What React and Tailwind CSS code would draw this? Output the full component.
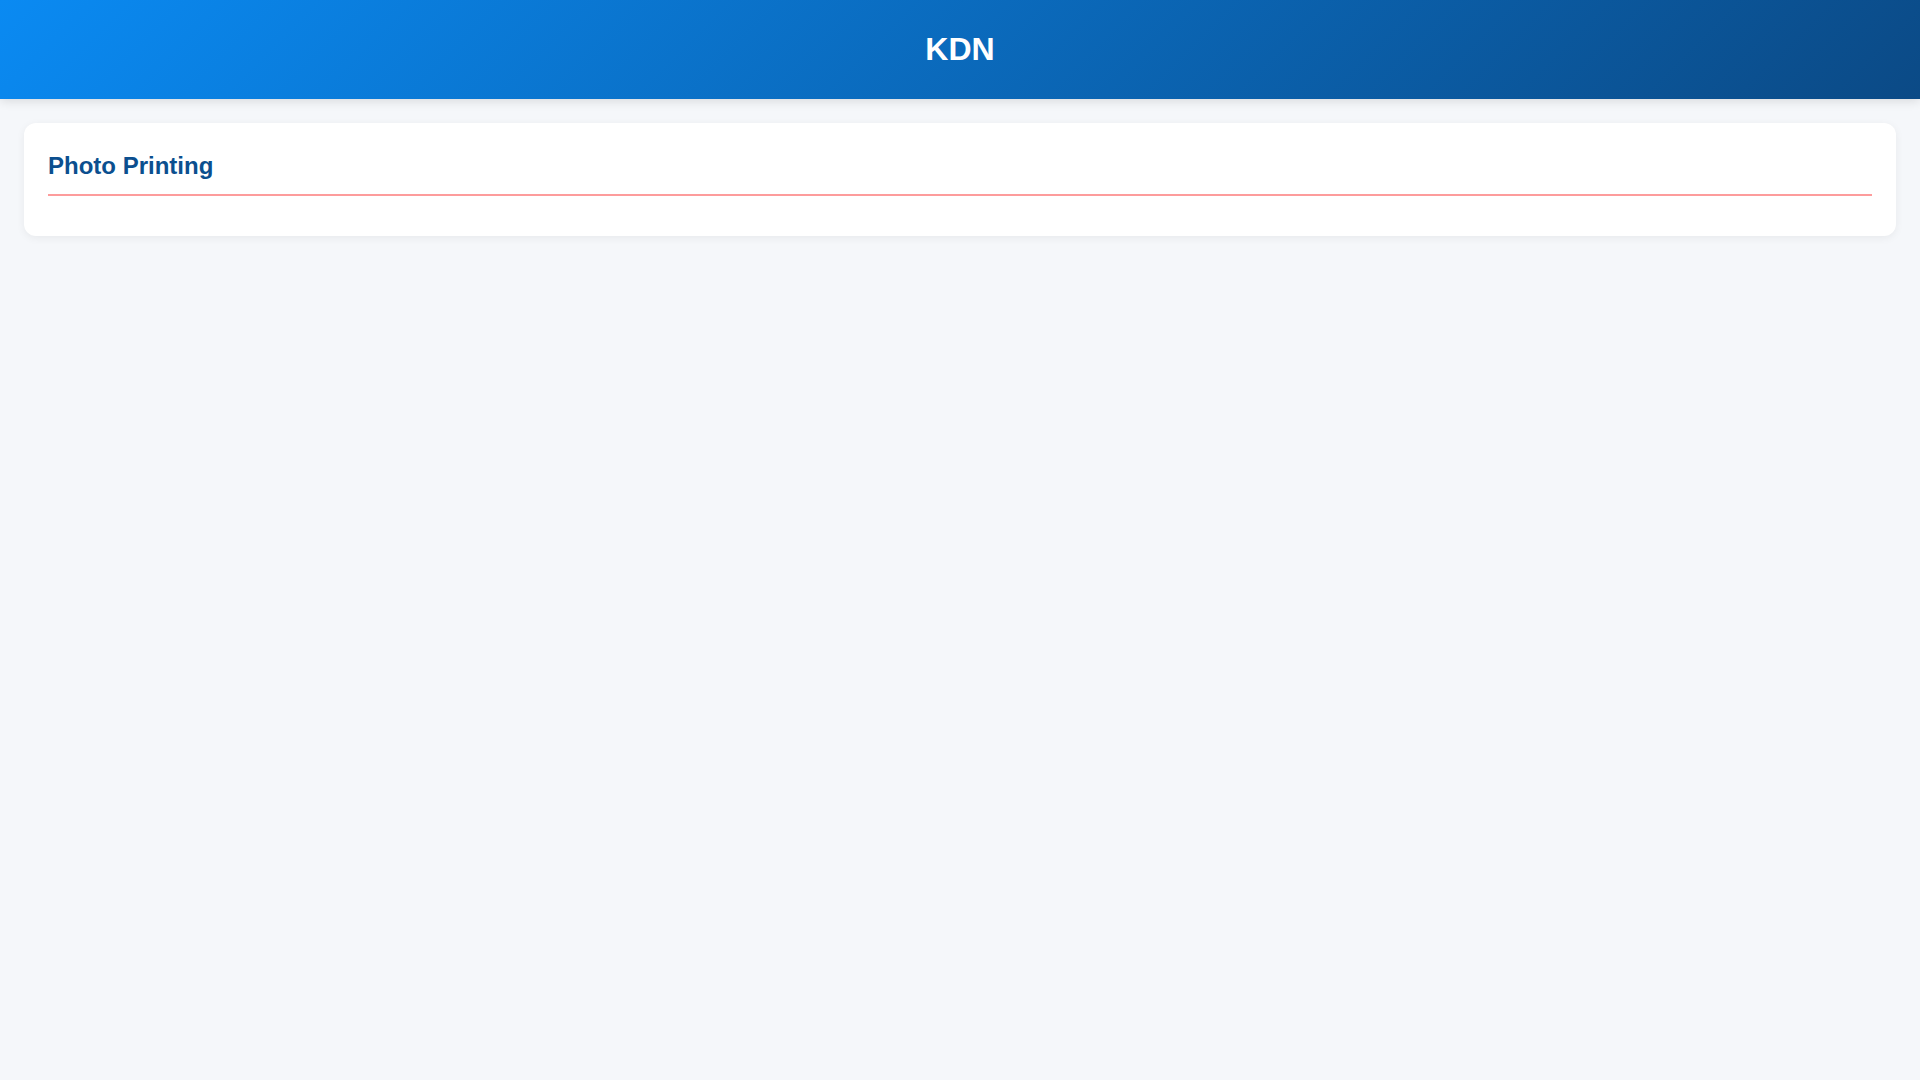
import React from "react";

export default function App() {
  return (
    <div
      className="min-h-screen bg-[#f5f7fa]"
      style={{ fontFamily: '"Liberation Sans", Arial, sans-serif' }}
    >
      <header className="h-[99px] pb-[2px] flex items-center justify-center bg-[linear-gradient(135deg,#0a8af2_0%,#0b4a86_100%)] shadow-[0_2px_10px_rgba(0,0,0,0.12)] relative">
        <h1 className="text-[32px] font-bold text-white leading-none">KDN</h1>
      </header>
      <main className="p-6">
        <section className="bg-white rounded-xl shadow-[0_2px_8px_rgba(0,0,0,0.06)] px-6 pt-[28px] pb-6">
          <h2 className="text-[24px] leading-[30px] font-bold text-[#0b4f8f] pb-[13px] border-b-2 border-[#fd9c9c] mb-[16px]">
            Photo Printing
          </h2>
        </section>
      </main>
    </div>
  );
}
